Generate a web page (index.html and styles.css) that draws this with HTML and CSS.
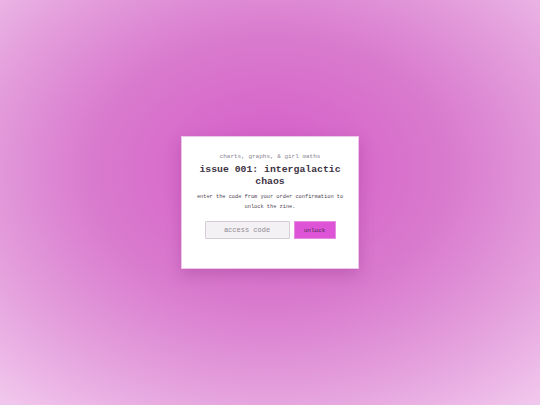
FILE: index.html
```html
<!DOCTYPE html>
<html>
<head>
<meta charset="utf-8">
<link rel="stylesheet" href="styles.css">
</head>
<body>
<main class="stage">
  <section class="card">
    <p class="kicker">charts, graphs, &amp; girl maths</p>
    <h1 class="title">issue 001: intergalactic chaos</h1>
    <p class="lede">enter the code from your order confirmation to unlock the zine.</p>
    <form class="gate">
      <input class="code" type="text" placeholder="access code">
      <button class="unlock" type="button">unlock</button>
    </form>
  </section>
</main>
</body>
</html>
```
FILE: styles.css
```css
html, body {
  margin: 0;
  height: 100%;
}
body {
  font-family: "Liberation Mono", "DejaVu Sans Mono", monospace;
  background: radial-gradient(ellipse 75% 75% at 50% 42%, #d65cc8 0%, #d97bce 45%, #e6a6df 78%, #f1c6ec 100%);
}
.stage {
  height: 405px;
  display: flex;
  justify-content: center;
  padding-top: 136px;
  box-sizing: border-box;
}
.card {
  width: 178px;
  height: 133px;
  box-sizing: border-box;
  background: #fff;
  border: 1px solid #eec6ea;
  box-shadow: 0 6px 14px rgba(120, 30, 110, 0.25);
  padding: 16px 10px 0;
  text-align: center;
  color: #3a2e3c;
}
.kicker {
  margin: 0;
  font-size: 6px;
  line-height: 8px;
  color: #8a8290;
}
.title {
  margin: 3px 0 0;
  font-size: 9.8px;
  line-height: 11.5px;
  font-weight: bold;
  color: #3d3345;
}
.lede {
  margin: 6px 0 0;
  font-size: 5.3px;
  line-height: 9.5px;
  color: #4e4452;
}
.gate {
  margin: 9px 0 0;
  display: flex;
  justify-content: center;
  gap: 4px;
}
.code {
  width: 85px;
  height: 18px;
  box-sizing: border-box;
  background: #f4f1f4;
  border: 1px solid #d4cfd6;
  border-radius: 1px;
  font-family: "Liberation Mono", "DejaVu Sans Mono", monospace;
  font-size: 7px;
  text-align: center;
  padding: 0;
  color: #5e5462;
}
.code::placeholder {
  color: #8e8892;
}
.unlock {
  width: 42px;
  height: 18px;
  box-sizing: border-box;
  background: #dd55d6;
  border: 1px solid #e78ee2;
  font-family: "Liberation Mono", "DejaVu Sans Mono", monospace;
  font-size: 6px;
  color: #4a2a50;
  padding: 0;
}
```
